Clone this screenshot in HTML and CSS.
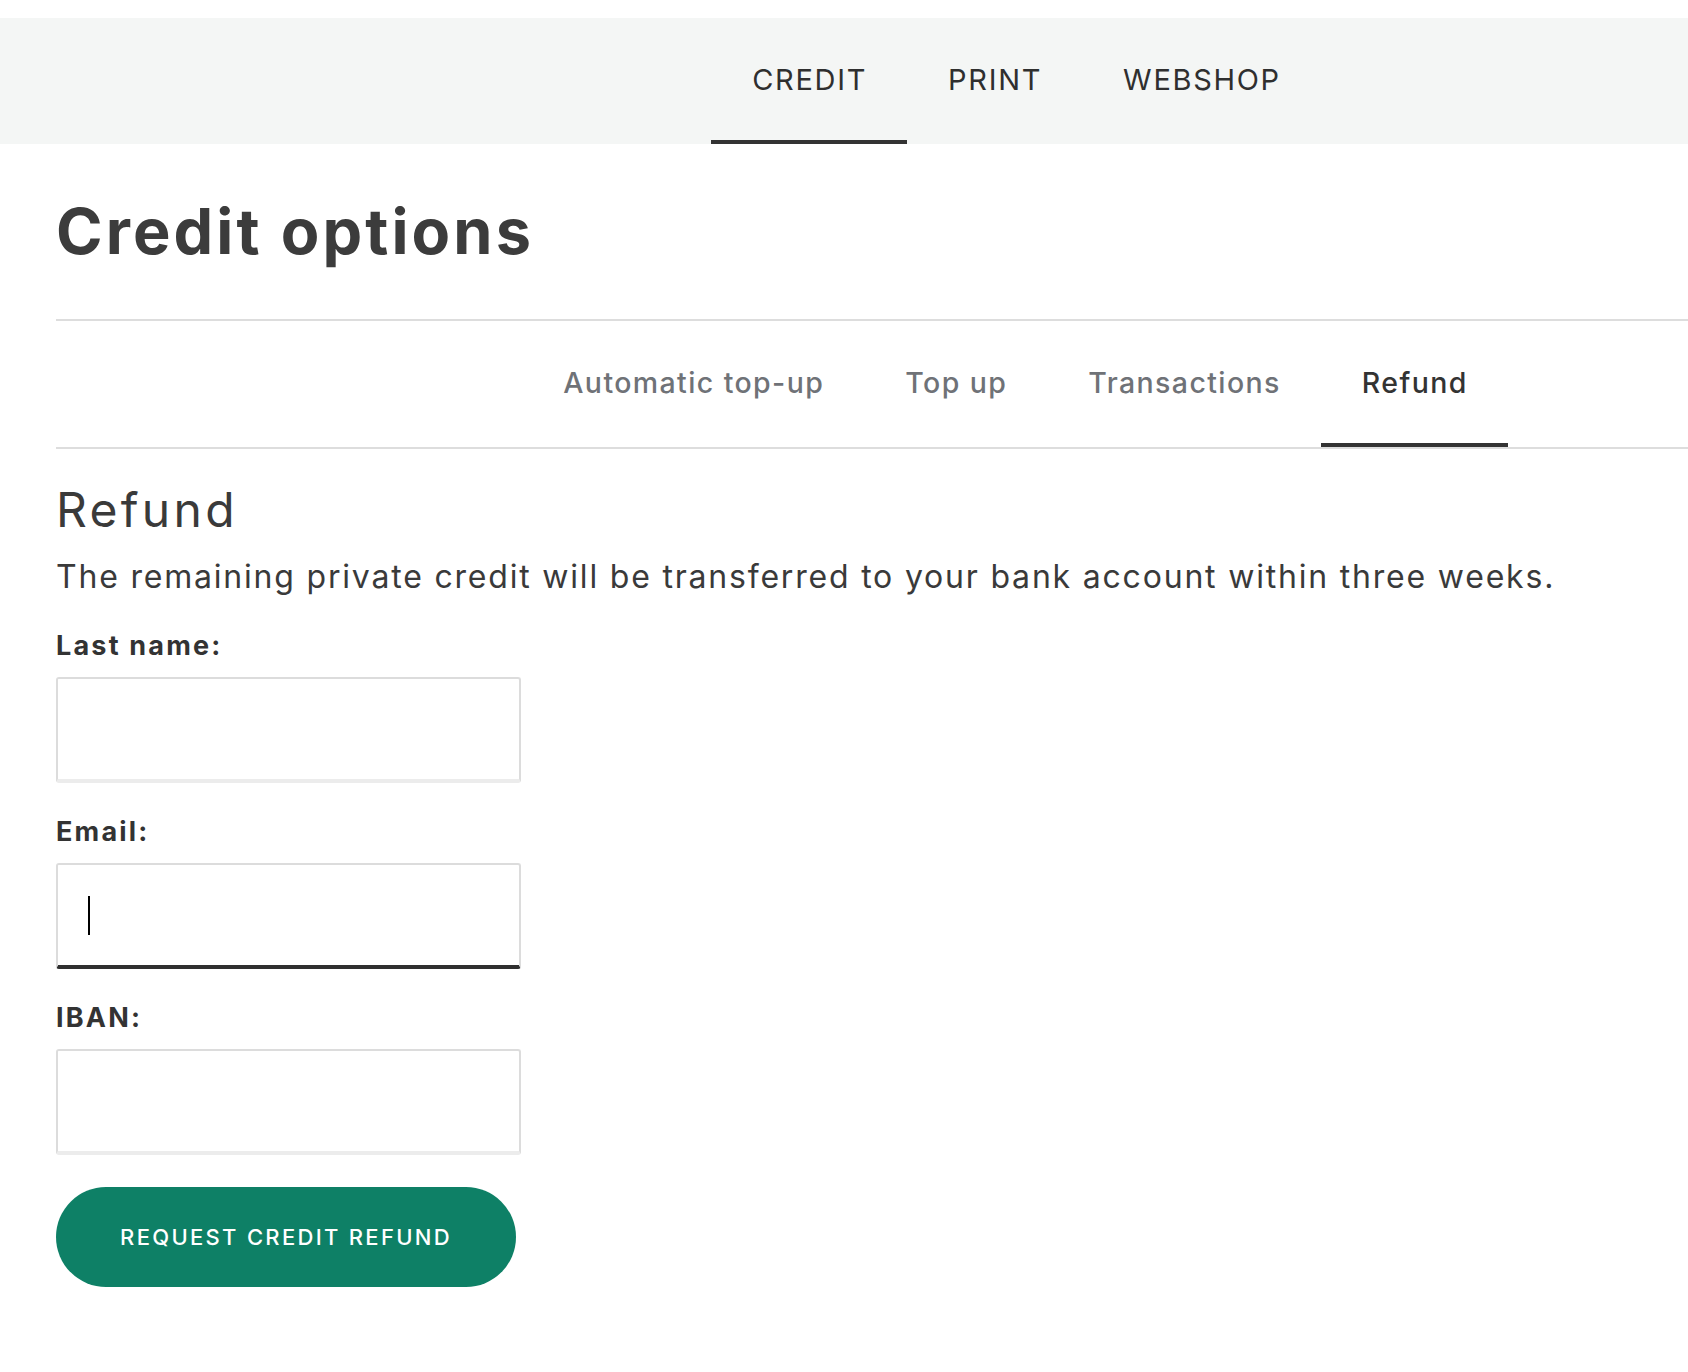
FILE: index.html
```html
<!DOCTYPE html>
<html lang="en">
<head>
<meta charset="utf-8">
<title>Credit options</title>
<link rel="stylesheet" href="styles.css">
</head>
<body>
<header class="topbar">
  <nav class="topnav">
    <a class="topnav-item is-active" href="#">CREDIT</a>
    <a class="topnav-item" href="#">PRINT</a>
    <a class="topnav-item" href="#">WEBSHOP</a>
  </nav>
</header>
<main class="page">
  <h1 class="page-title">Credit options</h1>
  <nav class="tabs">
    <a class="tab" href="#">Automatic top-up</a>
    <a class="tab" href="#">Top up</a>
    <a class="tab" href="#">Transactions</a>
    <a class="tab is-active" href="#">Refund</a>
  </nav>
  <section class="refund">
    <h2 class="section-title">Refund</h2>
    <p class="intro">The remaining private credit will be transferred to your bank account within three weeks.</p>
    <form class="form">
      <div class="field">
        <label class="label" for="lastname">Last name:</label>
        <input class="input" id="lastname" type="text">
      </div>
      <div class="field">
        <label class="label" for="email">Email:</label>
        <div class="input-wrap">
          <input class="input is-focused" id="email" type="email">
          <span class="caret"></span>
        </div>
      </div>
      <div class="field">
        <label class="label" for="iban">IBAN:</label>
        <input class="input" id="iban" type="text">
      </div>
      <button class="btn" type="button">REQUEST CREDIT REFUND</button>
    </form>
  </section>
</main>
</body>
</html>
```

FILE: styles.css
```css
html, body {
  margin: 0;
  padding: 0;
  background: #ffffff;
  overflow-x: hidden;
}
body {
  font-family: Inter, "Noto Sans", sans-serif;
  color: #333333;
}
a { text-decoration: none; color: inherit; }

.topbar {
  margin-top: 18px;
  background: #f4f6f5;
  height: 126px;
}
.topnav {
  display: flex;
  justify-content: center;
  height: 100%;
  padding-left: 344px;
}
.topnav-item {
  display: flex;
  align-items: center;
  padding: 0 40px 0 41px;
  box-sizing: border-box;
  border-bottom: 4px solid transparent;
  font-size: 29px;
  letter-spacing: 1.7px;
  color: #2f2f2f;
}
.topnav-item.is-active {
  border-bottom-color: #333333;
}

.page {
  padding-left: 56px;
}
.page-title {
  margin: 49px 0 0;
  font-size: 63px;
  line-height: 76px;
  font-weight: 700;
  letter-spacing: 3.1px;
  color: #3c3c3c;
  padding-bottom: 50px;
  border-bottom: 2px solid #dddddd;
}

.tabs {
  display: flex;
  justify-content: center;
  padding-left: 286px;
  border-bottom: 2px solid #dddddd;
}
.tab {
  display: flex;
  align-items: center;
  height: 126px;
  box-sizing: border-box;
  padding: 0 40px 0 41px;
  border-bottom: 4px solid transparent;
  font-size: 28.5px;
  font-weight: 500;
  letter-spacing: 1.4px;
  color: #6f7277;
}
.tab.is-active {
  color: #333333;
  border-bottom-color: #333333;
}

.section-title {
  margin: 33px 0 0;
  font-size: 48px;
  line-height: 56px;
  font-weight: 400;
  letter-spacing: 3.3px;
  color: #3a3a3a;
}
.intro {
  margin: 17px 0 0;
  font-size: 32px;
  line-height: 44px;
  letter-spacing: 1.8px;
  color: #3a3a3a;
}

.form {
  display: flex;
  flex-direction: column;
  align-items: flex-start;
  margin-top: 29px;
}
.field {
  display: flex;
  flex-direction: column;
  margin-bottom: 31px;
}
.label {
  font-size: 27px;
  line-height: 36px;
  font-weight: 700;
  letter-spacing: 2.2px;
  color: #333333;
  margin-bottom: 13px;
}
.input-wrap {
  position: relative;
}
.input {
  display: block;
  width: 465px;
  height: 106px;
  box-sizing: border-box;
  margin: 0;
  padding: 0 30px;
  border: 2px solid #dcdcdc;
  border-bottom: 4px solid #ececec;
  border-radius: 3px;
  background: #ffffff;
  font-family: inherit;
  font-size: 28px;
  color: #333333;
  outline: none;
  caret-color: transparent;
}
.input.is-focused {
  border-bottom-color: #2f2f2f;
}
.caret {
  position: absolute;
  left: 32px;
  top: 33px;
  width: 2px;
  height: 39px;
  background: #000000;
}

.btn {
  margin-top: 1px;
  width: 460px;
  height: 100px;
  border: none;
  border-radius: 50px;
  background: #0e8066;
  color: #ffffff;
  font-family: inherit;
  font-size: 22px;
  font-weight: 500;
  letter-spacing: 2.3px;
  cursor: pointer;
}
```
